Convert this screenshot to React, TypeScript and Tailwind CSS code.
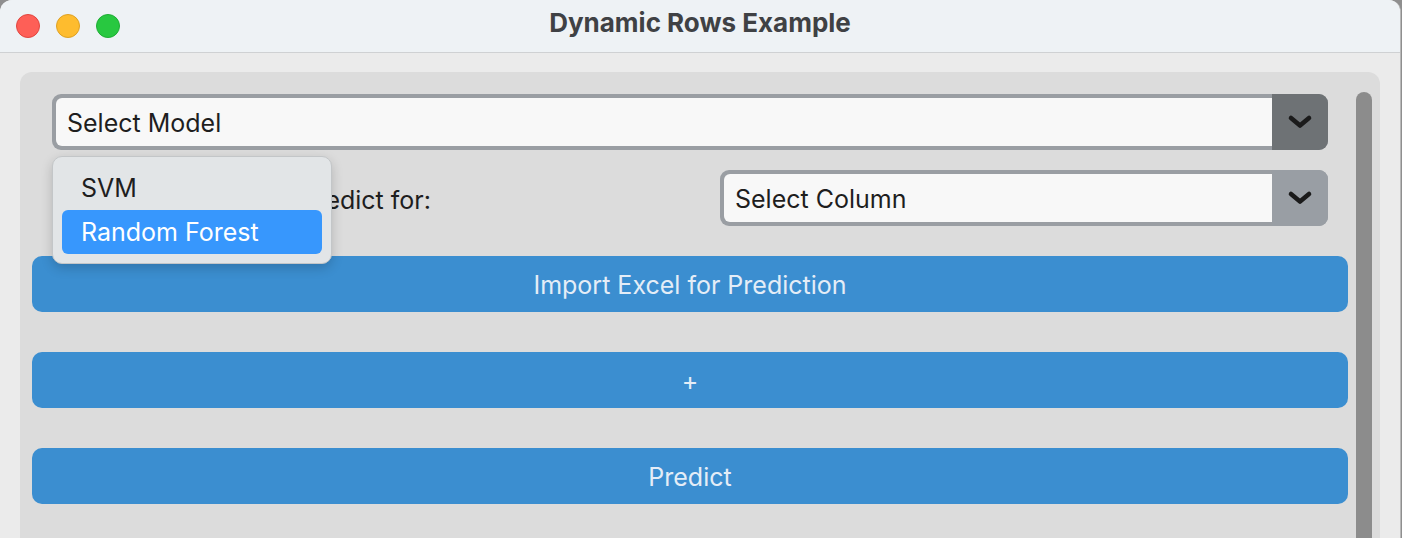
import { useState } from 'react';

const font = { fontFamily: 'Inter, "Noto Sans", sans-serif' };

function Chevron() {
  return (
    <svg width="26" height="18" viewBox="0 0 26 18">
      <path d="M4 5 L13 12.5 L22 5" fill="none" stroke="#1b1b1b" strokeWidth="4.6" strokeLinecap="round" strokeLinejoin="round" />
    </svg>
  );
}

function Select({ label, active, className }: { label: string; active?: boolean; className?: string }) {
  return (
    <div className={`flex h-[56px] rounded-[9px] bg-[#9a9ea3] ${className ?? ''}`}>
      <div className="flex-1 my-[4px] ml-[4px] bg-[#f8f8f8] rounded-l-[6px] flex items-center pl-[11px] pt-[3px] text-[25px] text-[#1e1e1e]">
        {label}
      </div>
      <div
        className={`w-[56px] flex items-center justify-center rounded-r-[9px] ${
          active ? 'bg-[#6e7275]' : 'bg-[#999ea4]'
        }`}
      >
        <Chevron />
      </div>
    </div>
  );
}

export default function App() {
  const [model] = useState('Select Model');
  const options = ['SVM', 'Random Forest'];

  return (
    <div className="w-[1402px] h-[538px] overflow-hidden bg-[#8f8f8f]" style={font}>
      <div className="w-[1401px] h-[538px] bg-[#ebebeb] rounded-t-[12px] border-r border-[#b9b9b9] overflow-hidden flex flex-col">
        {/* Title bar */}
        <div className="h-[53px] shrink-0 bg-[#eef2f5] border-b border-[#cfd1d3] flex items-center relative">
          <div className="flex items-center gap-[16px] pl-[16px]">
            <span className="w-[24px] h-[24px] rounded-full bg-[#fe5f57] border border-[#e1463f]" />
            <span className="w-[24px] h-[24px] rounded-full bg-[#febc2e] border border-[#dea123]" />
            <span className="w-[24px] h-[24px] rounded-full bg-[#28c840] border border-[#1ead34]" />
          </div>
          <div className="absolute inset-x-0 top-0 h-[45px] flex items-center justify-center text-[26px] font-bold text-[#3f4144] pointer-events-none">
            Dynamic Rows Example
          </div>
        </div>

        {/* Content */}
        <div className="flex-1 pt-[19px] pl-[20px] pr-[20px]">
          <div className="h-full bg-[#dcdcdc] rounded-t-[12px] flex pl-[12px] pr-[8px]">
            <div className="flex-1 flex flex-col relative">
              <div className="px-[20px] pt-[22px]">
                <Select label={model} active />
                <div className="flex items-center mt-[20px]">
                  <span className="flex-1 text-[25px] text-[#1e1e1e] pt-[5px]">Select the column to predict for:</span>
                  <Select label="Select Column" className="w-[608px]" />
                </div>
              </div>

              <div className="flex flex-col gap-[40px] mt-[30px]">
                {['Import Excel for Prediction', '+', 'Predict'].map((t) => (
                  <button
                    key={t}
                    className="h-[56px] w-full rounded-[10px] bg-[#3b8ed0] text-[25px] text-[#e4edf7] pt-[3px]"
                  >
                    {t}
                  </button>
                ))}
              </div>

              {/* Open dropdown menu */}
              <div className="absolute left-[20px] top-[84px] w-[280px] rounded-[10px] bg-[#e2e5e7] border border-[#c3c6c8] shadow-[0_4px_12px_rgba(0,0,0,0.18)] py-[9px] px-[9px]">
                {options.map((o, i) => (
                  <div
                    key={o}
                    className={`h-[44px] flex items-center pl-[19px] pt-[2px] rounded-[6px] text-[25px] ${
                      i === 1 ? 'bg-[#3797fd] text-white' : 'text-[#1e1e1e]'
                    }`}
                  >
                    {o}
                  </div>
                ))}
              </div>
            </div>

            {/* Scrollbar */}
            <div className="w-[16px] ml-[8px] pt-[20px]">
              <div className="h-full bg-[#8c8c8c] rounded-t-full" />
            </div>
          </div>
        </div>
      </div>
    </div>
  );
}
